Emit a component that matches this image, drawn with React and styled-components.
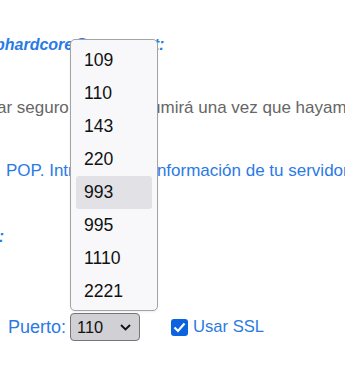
import React from "react";
import styled, { createGlobalStyle } from "styled-components";

const Global = createGlobalStyle`
  html, body { margin: 0; padding: 0; overflow: hidden; background: #fff; }
  body { font-family: "Liberation Sans", Arial, sans-serif; }
`;

const Page = styled.div`
  position: relative;
  width: 345px;
  height: 384px;
  overflow: hidden;
  padding-top: 35px;
  box-sizing: border-box;
`;

const Line = styled.div`
  white-space: nowrap;
  font-size: ${(p) => (p.$strong ? "16px" : "17px")};
  line-height: 20px;
  height: 20px;
  margin-left: ${(p) => p.$shift}px;
  margin-bottom: ${(p) => p.$after}px;
  color: ${(p) => (p.$tone === "gray" ? "#666666" : "#2a7ae6")};
  font-weight: ${(p) => (p.$strong ? 700 : 400)};
  font-style: ${(p) => (p.$strong ? "italic" : "normal")};
`;

const FormRow = styled.div`
  display: flex;
  align-items: center;
  height: 28px;
  margin-left: 8px;
`;

const Label = styled.span`
  font-size: 18px;
  color: #2a7ae6;
  width: 62px;
`;

const Select = styled.div`
  box-sizing: border-box;
  width: 70px;
  height: 28px;
  border: 1px solid #767679;
  border-radius: 4px;
  background: #d0d0d5;
  display: flex;
  align-items: center;
  justify-content: space-between;
  padding: 0 8px 0 6px;
  font-size: 16.4px;
  color: #111;
`;

const Check = styled.span`
  width: 17px;
  height: 17px;
  margin-left: 31px;
  border-radius: 3px;
  background: #0b63e0;
  display: inline-flex;
  align-items: center;
  justify-content: center;
`;

const CheckLabel = styled.span`
  margin-left: 5px;
  font-size: 16.6px;
  color: #2a7ae6;
`;

const Popup = styled.div`
  position: absolute;
  left: 70px;
  top: 39px;
  width: 88px;
  height: 272px;
  box-sizing: border-box;
  border: 1px solid #a3a3a6;
  border-radius: 5px;
  background: #f8f8fa;
  padding: 4px 5px 0 5px;
  box-shadow: 0 1px 2px rgba(0,0,0,0.08);
`;

const Option = styled.div`
  height: 33px;
  box-sizing: border-box;
  border-radius: 3px;
  padding-left: 8px;
  display: flex;
  align-items: center;
  font-size: 17.6px;
  color: #111;
  background: ${(p) => (p.$active ? "#e1e1e6" : "transparent")};
`;

const ports = ["109", "110", "143", "220", "993", "995", "1110", "2221"];

export default function App() {
  return (
    <Page>
      <Global />
      <Line $shift={-5} $after={43} $strong>
        phardcore@arsys.net:
      </Line>
      <Line $shift={-3} $after={43} $tone="gray">
        ar seguro, eso se asumirá una vez que hayamos
      </Line>
      <Line $shift={6} $after={46}>
        POP. Introduce ahí información de tu servidor
      </Line>
      <Line $shift={-12} $after={66} $strong>
        S:
      </Line>
      <FormRow>
        <Label>Puerto:</Label>
        <Select>
          <span>110</span>
          <svg width="11" height="7" viewBox="0 0 11 7">
            <path d="M1 1 L5.5 5.5 L10 1" fill="none" stroke="#111" strokeWidth="1.8" />
          </svg>
        </Select>
        <Check>
          <svg width="13" height="11" viewBox="0 0 13 11">
            <path d="M1.5 5.5 L5 9 L11.5 1.5" fill="none" stroke="#fff" strokeWidth="2.2" />
          </svg>
        </Check>
        <CheckLabel>Usar SSL</CheckLabel>
      </FormRow>
      <Popup>
        {ports.map((p) => (
          <Option key={p} $active={p === "993"}>
            {p}
          </Option>
        ))}
      </Popup>
    </Page>
  );
}
